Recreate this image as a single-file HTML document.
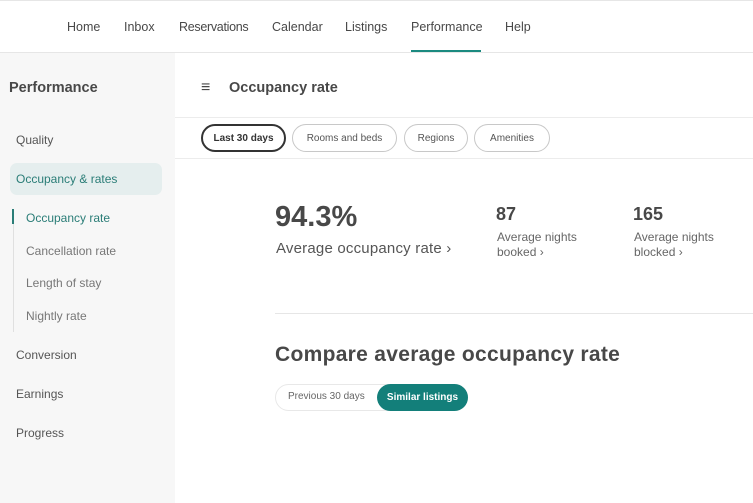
<!DOCTYPE html>
<html><head><style>
*{margin:0;padding:0;box-sizing:border-box}
body{width:753px;height:503px;overflow:hidden;background:#fff;font-family:"Liberation Sans",sans-serif;color:#484848;position:relative}
.a{position:absolute;white-space:nowrap}
.nav{top:20px;font-size:12.5px;color:#484848}
.side{left:0;top:53px;width:175px;height:450px;background:#f7f7f7}
.si{font-size:12px;color:#555}
.sub{font-size:12px;color:#777}
.chip{position:absolute;top:124px;height:28px;border:1px solid #c8c8c8;border-radius:14px;font-size:10px;color:#555;display:flex;align-items:center;justify-content:center}
</style></head><body>
<div class="a" style="left:0;top:0;width:753px;height:1px;background:#e6e6e6"></div>
<div class="a nav" style="left:67px">Home</div>
<div class="a nav" style="left:124px">Inbox</div>
<div class="a nav" style="left:179px;letter-spacing:-0.3px">Reservations</div>
<div class="a nav" style="left:272px">Calendar</div>
<div class="a nav" style="left:345px">Listings</div>
<div class="a nav" style="left:411px">Performance</div>
<div class="a nav" style="left:505px">Help</div>
<div class="a" style="left:411px;top:50px;width:70px;height:2px;background:#1b8a80"></div>
<div class="a" style="left:0;top:52px;width:753px;height:1px;background:#e6e6e6"></div>

<div class="a side"></div>
<div class="a" style="left:9px;top:80px;font-size:14.5px;font-weight:bold;color:#484848">Performance</div>
<div class="a si" style="left:16px;top:133px">Quality</div>
<div class="a" style="left:10px;top:163px;width:152px;height:32px;background:#e5eeee;border-radius:7px"></div>
<div class="a si" style="left:16px;top:172px;color:#2a7d77">Occupancy &amp; rates</div>
<div class="a" style="left:13px;top:209px;width:1px;height:123px;background:#e0e0e0"></div>
<div class="a" style="left:12px;top:209px;width:2px;height:15px;background:#2a7d77"></div>
<div class="a sub" style="left:26px;top:211px;color:#2a7d77">Occupancy rate</div>
<div class="a sub" style="left:26px;top:244px">Cancellation rate</div>
<div class="a sub" style="left:26px;top:276px">Length of stay</div>
<div class="a sub" style="left:26px;top:309px">Nightly rate</div>
<div class="a si" style="left:16px;top:348px">Conversion</div>
<div class="a si" style="left:16px;top:387px">Earnings</div>
<div class="a si" style="left:16px;top:426px">Progress</div>

<div class="a" style="left:201px;top:79px;font-size:16px;color:#484848">≡</div>
<div class="a" style="left:229px;top:80px;font-size:14.5px;font-weight:bold;color:#484848">Occupancy rate</div>
<div class="a" style="left:175px;top:117px;width:578px;height:1px;background:#ececec"></div>
<div class="chip" style="left:201px;width:85px;border:2px solid #333;font-weight:bold;color:#333">Last 30 days</div>
<div class="chip" style="left:292px;width:105px">Rooms and beds</div>
<div class="chip" style="left:404px;width:64px">Regions</div>
<div class="chip" style="left:474px;width:76px">Amenities</div>
<div class="a" style="left:175px;top:158px;width:578px;height:1px;background:#ececec"></div>

<div class="a" style="left:275px;top:201px;font-size:29px;font-weight:bold;color:#484848">94.3%</div>
<div class="a" style="left:276px;top:240px;font-size:15px;color:#555;letter-spacing:0.2px">Average occupancy rate ›</div>
<div class="a" style="left:496px;top:204px;font-size:18px;font-weight:bold;color:#484848">87</div>
<div class="a" style="left:497px;top:230px;font-size:12px;color:#666;line-height:15px">Average nights<br>booked ›</div>
<div class="a" style="left:633px;top:204px;font-size:18px;font-weight:bold;color:#484848">165</div>
<div class="a" style="left:634px;top:230px;font-size:12px;color:#666;line-height:15px">Average nights<br>blocked ›</div>
<div class="a" style="left:275px;top:313px;width:478px;height:1px;background:#e6e6e6"></div>
<div class="a" style="left:275px;top:343px;font-size:21px;font-weight:bold;color:#484848;letter-spacing:0.3px">Compare average occupancy rate</div>
<div class="a" style="left:275px;top:384px;width:193px;height:27px;border:1px solid #e8e8e8;border-radius:14px"></div>
<div class="a" style="left:288px;top:391px;font-size:10px;color:#666">Previous 30 days</div>
<div class="a" style="left:377px;top:384px;width:91px;height:27px;background:#137f7a;border-radius:14px;color:#fff;font-size:10px;font-weight:bold;display:flex;align-items:center;justify-content:center">Similar listings</div>
</body></html>
